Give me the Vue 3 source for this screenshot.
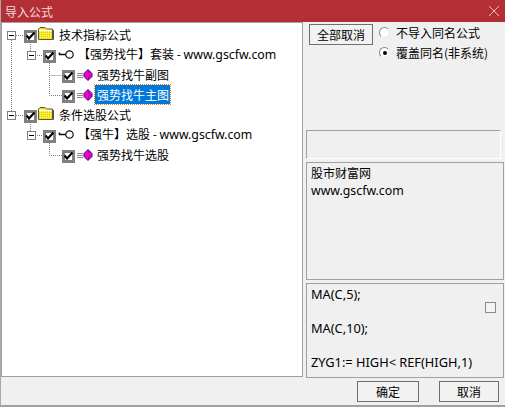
<script setup>
const rows = [
  { level: 0, minus: true, icon: 'folder', text: '技术指标公式' },
  { level: 1, minus: true, icon: 'key', cjk: '【强势找牛】套装 - ', latin: 'www.gscfw.com' },
  { level: 2, icon: 'gem', text: '强势找牛副图' },
  { level: 2, icon: 'gem', text: '强势找牛主图', selected: true },
  { level: 0, minus: true, icon: 'folder', text: '条件选股公式' },
  { level: 1, minus: true, icon: 'key', cjk: '【强牛】选股 - ', latin: 'www.gscfw.com' },
  { level: 2, icon: 'gem', text: '强势找牛选股' },
]
</script>

<template>
  <div class="window">
    <header class="titlebar">
      <span class="title">导入公式</span>
      <svg class="close" width="10" height="10" viewBox="0 0 10 10"><path d="M0 0L10 10M10 0L0 10" stroke="#f0d4d6" stroke-width="0.9" fill="none" /></svg>
    </header>
    <main class="body">
      <section class="tree">
        <svg class="lines" width="100" height="170" viewBox="0 0 100 170">
          <g stroke="#808080" stroke-width="1" stroke-dasharray="1 1" fill="none">
            <path d="M11.5 40V111M16 35.5H24M16 115.5H24M30.5 44V51M35 55.5H43M49.5 63V95.5H62M49.5 75.5H62M30.5 124V131M35 135.5H43M49.5 143V155.5H62" />
          </g>
        </svg>
        <div v-for="(row, i) in rows" :key="i" class="row" :class="'lv' + row.level">
          <span v-if="row.minus" class="minus"><i></i></span>
          <span class="check">
            <svg width="9" height="8" viewBox="0 0 9 8"><path d="M0.5 3.5L3 6.5L8.5 0.5" stroke="#000" stroke-width="2.2" fill="none" /></svg>
          </span>
          <svg v-if="row.icon === 'folder'" class="ic folder" width="16" height="13" viewBox="0 0 16 13">
            <defs>
              <pattern id="dither" width="2" height="2" patternUnits="userSpaceOnUse">
                <rect width="2" height="2" fill="#ffe600" />
                <rect width="1" height="1" fill="#fff6a0" />
                <rect x="1" y="1" width="1" height="1" fill="#d8d030" />
              </pattern>
            </defs>
            <path d="M0.5 12.5V2L2 0.5H7L8.5 2H14.5V12.5Z" fill="url(#dither)" stroke="#5a5a3a" />
            <path d="M1 3.5H14" stroke="#fff" />
            <path d="M15.5 3V13" stroke="#555" />
          </svg>
          <svg v-else-if="row.icon === 'key'" class="ic key" width="16" height="9" viewBox="0 0 16 9">
            <circle cx="11.5" cy="4.5" r="3.7" fill="#fff" stroke="#111" stroke-width="1.2" />
            <path d="M8 4.5H1M1.5 2.5V5" stroke="#111" stroke-width="1.6" fill="none" />
          </svg>
          <svg v-else class="ic gem" width="16" height="12" viewBox="0 0 16 12">
            <path d="M0 4.5H6M0 6.5H6M0 8.5H6" stroke="#8c8c8c" />
            <path d="M11 0.5L15 4.5V7.5L11 11.5L7 7.5V4.5Z" fill="#f000e0" stroke="#3a0c48" />
            <path d="M11 1L12.5 6L11 11" stroke="#a000a0" fill="none" />
          </svg>
          <span v-if="row.text" class="label" :class="{ selected: row.selected }">{{ row.text }}</span>
          <span v-else class="label pair"><span class="cjk">{{ row.cjk }}</span><span class="latin">{{ row.latin }}</span></span>
        </div>
      </section>
      <aside class="side">
        <div class="options">
          <button class="btn all">全部取消</button>
          <div class="radios">
            <label class="radio"><span class="dot"></span>不导入同名公式</label>
            <label class="radio"><span class="dot on"></span>覆盖同名(非系统)</label>
          </div>
        </div>
        <div class="box empty"></div>
        <div class="box info">
          <div class="cjk">股市财富网</div>
          <div class="latin">www.gscfw.com</div>
        </div>
        <div class="box code">
          <div>MA(C,5);</div>
          <div class="gap">MA(C,10);</div>
          <div class="gap">ZYG1:= HIGH&lt; REF(HIGH,1)</div>
          <span class="mini"></span>
        </div>
      </aside>
    </main>
    <footer class="foot">
      <button class="btn ok">确定</button>
      <button class="btn cancel">取消</button>
    </footer>
  </div>
</template>

<style scoped>
.window {
  width: 505px;
  height: 407px;
  box-sizing: border-box;
  display: flex;
  flex-direction: column;
  background: #f0f0f0;
  border-left: 1px solid #a8a8a8;
  border-bottom: 2px solid #a0a0a0;
  font-family: "Noto Sans CJK SC", "Noto Sans", sans-serif;
  font-size: 12px;
  color: #000;
  overflow: hidden;
}
.titlebar {
  height: 22px;
  flex: none;
  margin-left: -1px;
  display: flex;
  align-items: center;
  justify-content: space-between;
  padding: 0 6px 0 5px;
  background: #b32f35;
}
.title {
  color: #f4dcdc;
  font-size: 12px;
}
.body {
  flex: 1;
  min-height: 0;
  display: flex;
}
.tree {
  position: relative;
  width: 302px;
  height: 355px;
  box-sizing: border-box;
  padding-top: 3px;
  background: #fff;
  border: 1px solid #a0a0a0;
}
.lines {
  position: absolute;
  left: -2px;
  top: -23px;
  pointer-events: none;
}
.row {
  position: relative;
  height: 20px;
  display: flex;
  align-items: center;
}
.row.lv0 { padding-left: 22px; }
.row.lv1 { padding-left: 41px; }
.row.lv2 { padding-left: 60px; }
.minus {
  position: absolute;
  top: 5px;
  width: 9px;
  height: 9px;
  box-sizing: border-box;
  border: 1px solid #808080;
  background: #fff;
  display: flex;
  align-items: center;
  justify-content: center;
}
.lv0 .minus { left: 5px; }
.lv1 .minus { left: 25px; }
.minus i {
  display: block;
  width: 5px;
  height: 1px;
  background: #000;
}
.check {
  flex: none;
  width: 13px;
  height: 13px;
  box-sizing: border-box;
  border: 3px solid #808080;
  background: #fff;
  display: flex;
  align-items: center;
  justify-content: center;
}
.check svg { flex: none; }
.ic { flex: none; margin-left: 2px; }
.gem { margin-bottom: 2px; }
.folder { margin-left: 1px; margin-bottom: 6px; }
.key { margin-left: 2px; margin-bottom: 4px; }
.label {
  white-space: nowrap;
  line-height: 19px;
  margin-bottom: 4px;
}
.gem + .label {
  margin-left: 2px;
  padding: 0 1px 0 2px;
}
.key + .label { margin-left: 4px; }
.folder + .label { margin-left: 5px; }
.selected {
  background: #0078d7;
  color: #fff;
  outline: 1px dotted #d08020;
  outline-offset: 0;
}
.latin {
  font-family: "Noto Sans", sans-serif;
  font-size: 12.3px;
}
.side {
  flex: 1;
  min-width: 0;
  display: flex;
  flex-direction: column;
  padding: 2px 1px 0 3px;
}
.options {
  height: 106px;
  flex: none;
  margin-left: 3px;
  display: flex;
  gap: 6px;
  align-items: flex-start;
}
.btn {
  appearance: none;
  box-sizing: border-box;
  border: 1px solid #6f6f6f;
  background: #f2f2f2;
  font: inherit;
  font-size: 12px;
  padding: 0;
  color: #000;
}
.all {
  width: 64px;
  height: 21px;
}
.radios {
  display: flex;
  flex-direction: column;
  gap: 1px;
  margin-top: -1px;
}
.radio {
  height: 19px;
  display: flex;
  align-items: center;
  gap: 6px;
  white-space: nowrap;
}
.dot {
  width: 11px;
  height: 11px;
  box-sizing: border-box;
  border-radius: 50%;
  border: 1px solid #8a8a8a;
  border-right-color: #e8e8e8;
  border-bottom-color: #e8e8e8;
  background: #fff;
  display: flex;
  align-items: center;
  justify-content: center;
}
.dot.on::after {
  content: "";
  width: 4px;
  height: 4px;
  border-radius: 50%;
  background: #000;
}
.box {
  box-sizing: border-box;
  background: #f0f0f0;
  border: 1px solid #a0a0a0;
}
.empty {
  width: 195px;
  height: 29px;
  flex: none;
  border-right-color: #fff;
  border-bottom-color: #fff;
}
.info {
  margin-top: 3px;
  height: 118px;
  flex: none;
  padding: 1px 4px;
  line-height: 18px;
}
.code {
  position: relative;
  margin-top: 3px;
  height: 95px;
  flex: none;
  padding: 2px 4px;
  font-family: "Noto Sans", sans-serif;
  font-size: 12.8px;
  line-height: 17px;
}
.gap { margin-top: 17px; }
.mini {
  position: absolute;
  left: 178px;
  top: 18px;
  box-sizing: border-box;
  width: 11px;
  height: 11px;
  border: 1px solid #8a8a8a;
  background: #f4f4f4;
}
.foot {
  height: 28px;
  flex: none;
  box-sizing: border-box;
  display: flex;
  gap: 20px;
  padding: 4px 0 0 356px;
}
.ok {
  width: 62px;
  height: 21px;
}
.cancel {
  width: 60px;
  height: 21px;
}
</style>
